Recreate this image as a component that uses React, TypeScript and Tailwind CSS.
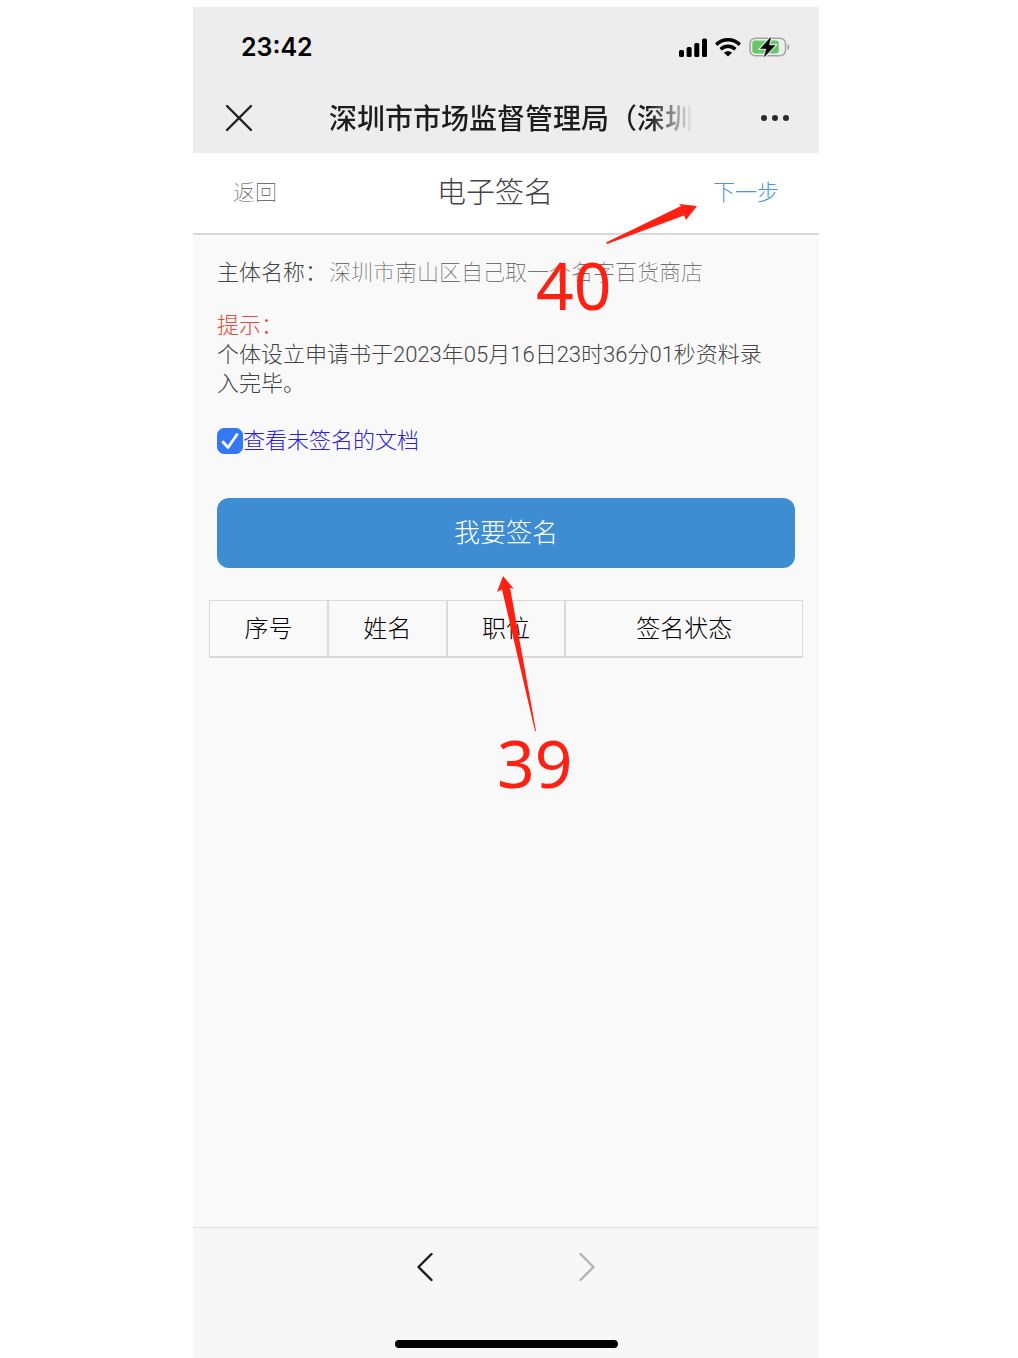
import { ChevronLeft, ChevronRight, X } from "lucide-react";

const columns = [
    { label: "序号", width: "w-1/5" },
    { label: "姓名", width: "w-1/5" },
    { label: "职位", width: "w-1/5" },
    { label: "签名状态", width: "w-2/5" },
];

function SignalIcon() {
    return (
        <svg viewBox="0 0 28 19" className="w-7 h-[19px]" fill="#000" aria-hidden="true">
            <rect x="0" y="12" width="5" height="7" rx="1.5" />
            <rect x="7.6" y="9" width="5" height="10" rx="1.5" />
            <rect x="15.3" y="5" width="5" height="14" rx="1.5" />
            <rect x="23" y="0.5" width="5" height="18.5" rx="1.5" />
        </svg>
    );
}

function WifiIcon() {
    return (
        <svg viewBox="0 0 26 19" className="w-[26px] h-[19px]" fill="none" stroke="#000" aria-hidden="true">
            <path d="M1.2 6.6C8 0.2 18 0.2 24.8 6.6" strokeWidth="3.6" />
            <path d="M5.6 11.2C9.9 7.2 16.1 7.2 20.4 11.2" strokeWidth="3.4" />
            <path d="M13 18.6L9 14.7C11.3 12.7 14.7 12.7 17 14.7Z" fill="#000" stroke="none" />
        </svg>
    );
}

function BatteryIcon() {
    const bolt = "M21.6 0.6L11.6 11.4H17.6L15.4 19.6L26 8.4H19.8Z";
    return (
        <svg viewBox="0 0 41 20" className="w-[41px] h-5" aria-hidden="true">
            <rect x="1" y="1.2" width="35.5" height="17.6" rx="5.5" fill="none" stroke="#a3a3a3" strokeWidth="1.5" />
            <path d="M38.3 7.2C41 8 41 12 38.3 12.8Z" fill="#a3a3a3" />
            <rect x="3.3" y="3.5" width="26.5" height="13" rx="3" fill="#67c767" />
            <path d={bolt} fill="#000" stroke="#ededed" strokeWidth="2.6" />
            <path d={bolt} fill="#000" stroke="#000" strokeWidth="0.6" />
        </svg>
    );
}

function StatusBar() {
    return (
        <div className="h-20 pl-12 pr-[29px] flex items-center justify-between">
            <span className="font-[Inter,sans-serif] text-[25px] leading-8 font-semibold text-black">23:42</span>
            <div className="flex items-center gap-2">
                <SignalIcon />
                <WifiIcon />
                <BatteryIcon />
            </div>
        </div>
    );
}

function BrowserBar() {
    return (
        <div className="h-[66px] pb-1 pl-[22px] pr-7 flex items-center justify-between">
            <button aria-label="关闭" className="text-[#222]">
                <X className="size-12" strokeWidth={1.2} />
            </button>
            <h1 className="pt-1 whitespace-nowrap text-[28px] leading-10 font-medium text-[#1c1c1c] [mask-image:linear-gradient(to_right,#000_88%,transparent)]">
                深圳市市场监督管理局（深圳
            </h1>
            <button aria-label="更多" className="flex gap-[5px] px-0.5">
                <span className="size-1.5 rounded-full bg-[#2b2b2b]" />
                <span className="size-1.5 rounded-full bg-[#2b2b2b]" />
                <span className="size-1.5 rounded-full bg-[#2b2b2b]" />
            </button>
        </div>
    );
}

function PageNav() {
    return (
        <nav className="h-[82px] px-10 flex items-center justify-between bg-white border-b-2 border-[#d9d9d9] font-thin">
            <a href="#back" className="w-[68px] text-[22px] leading-8 text-[#555]">返回</a>
            <h2 className="mr-6 text-[29px] leading-10 font-light text-[#444]">电子签名</h2>
            <a href="#next" className="text-[22px] leading-8 font-light text-[#4a95d4]">下一步</a>
        </nav>
    );
}

// Numbered step marks, drawn over the page
function StepMarks() {
    return (
        <div className="absolute inset-0 pointer-events-none text-[#ff2014] font-['Noto_Sans',sans-serif] text-[66px] leading-[68px]">
            <svg viewBox="0 0 91 40" className="absolute left-[413px] top-[197px] w-[91px] h-10" fill="currentColor" aria-hidden="true">
                <path d="M73 0L91 2L80 16L78 11.5L1 40L0 38.5L75 2Z" />
            </svg>
            <span className="absolute left-[343px] top-[243px]">40</span>
            <svg viewBox="0 0 39 155" className="absolute left-[304px] top-[569px] w-[39px] h-[155px]" fill="currentColor" aria-hidden="true">
                <path d="M6 0L17 13L13 11.5L39 155L38 155L5 13.5L0 16Z" />
            </svg>
            <span className="absolute left-[304px] top-[721px]">39</span>
        </div>
    );
}

export default function App() {
    return (
        <div className="min-h-screen pt-[7px] pr-1.5 flex justify-center bg-white font-[Roboto,'Noto_Sans_CJK_SC',sans-serif]">
            <div className="relative w-full max-w-[626px] flex flex-col bg-[#f9f9f9]">
                <header className="bg-[#ededed]">
                    <StatusBar />
                    <BrowserBar />
                </header>
                <PageNav />

                <main className="flex-1 px-4 pt-[22px] text-[22px] leading-[29px] font-light text-[#444]">
                    <div className="px-2">
                        <p className="flex gap-0.5 leading-8">
                            <span>主体名称：</span>
                            <span className="font-thin text-[#555]">深圳市南山区自己取一个名字百货商店</span>
                        </p>

                        <p className="mt-[22px] text-[#e8483d]">提示：</p>
                        <p>
                            个体设立申请书于2023年05月16日23时36分01秒资料录
                            <br />
                            入完毕。
                        </p>

                        <label className="mt-7 flex items-center text-[#2a20dc]">
                            <span className="relative flex">
                                <input type="checkbox" defaultChecked className="peer appearance-none size-[26px] rounded-[7px] border border-[#3478f6] checked:bg-[#3478f6]" />
                                <svg viewBox="0 0 26 26" className="absolute inset-0 size-[26px] hidden peer-checked:block" fill="none" stroke="#fff" strokeWidth="2.8" strokeLinecap="round" strokeLinejoin="round" aria-hidden="true">
                                    <path d="M6 14L11 19.5L20 6.5" />
                                </svg>
                            </span>
                            查看未签名的文档
                        </label>

                        <button className="mt-[43px] w-full h-[70px] rounded-xl bg-[#3e8cd1] text-[26px] text-white">
                            我要签名
                        </button>
                    </div>

                    <table className="mt-8 w-full table-fixed border-separate border-spacing-0 border-b border-[#d9d9d9] text-2xl text-black">
                        <thead>
                            <tr>
                                {columns.map((column) => (
                                    <th key={column.label} scope="col" className={`${column.width} h-[57px] border border-[#d9d9d9] font-light`}>
                                        {column.label}
                                    </th>
                                ))}
                            </tr>
                        </thead>
                    </table>
                </main>

                <footer className="h-[131px] pt-[13px] pb-2.5 flex flex-col items-center justify-between bg-[#f7f7f7] border-t border-[#dedede]">
                    <div className="flex gap-[110px]">
                        <button aria-label="后退" className="text-[#1a1a1a]">
                            <ChevronLeft className="size-[52px]" strokeWidth={1.1} />
                        </button>
                        <button aria-label="前进" className="text-[#b3b3b3]" disabled>
                            <ChevronRight className="size-[52px]" strokeWidth={1.1} />
                        </button>
                    </div>
                    <div className="w-[223px] h-2 rounded-full bg-black" />
                </footer>

                <StepMarks />
            </div>
        </div>
    );
}
